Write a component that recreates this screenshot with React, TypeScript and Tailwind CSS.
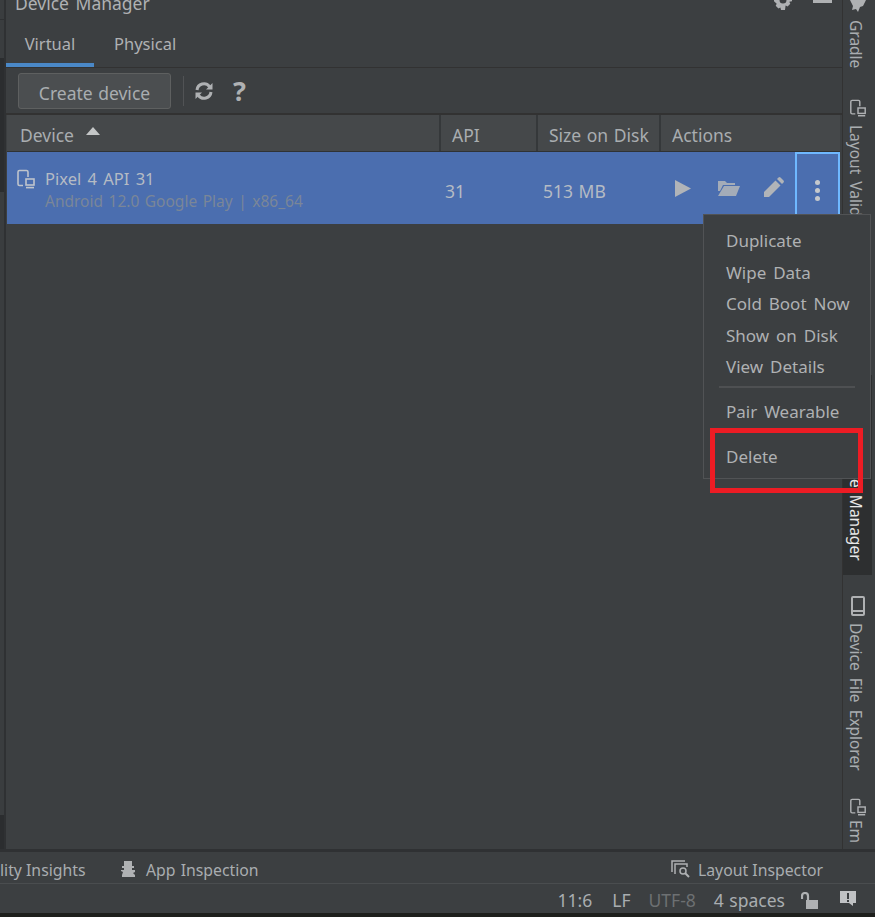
const font = "font-['Noto_Sans',sans-serif]"

function DevicesIcon({ className }: { className?: string }) {
  return (
    <svg viewBox="0 0 20 20" className={className} fill="none" stroke="currentColor" strokeWidth="1.6">
      <path d="M7 16.5H3.5a1.5 1.5 0 0 1-1.5-1.5V3a1.5 1.5 0 0 1 1.5-1.5h7A1.5 1.5 0 0 1 12 3v5" />
      <rect x="10" y="10" width="8" height="6" />
      <path d="M10 18.6h8" />
    </svg>
  )
}

function VerticalTab({ label, active }: { label: string; active?: boolean }) {
  return (
    <span className={`mr-[4px] [writing-mode:vertical-rl] [word-spacing:3px] whitespace-nowrap text-[15.5px] leading-[20px] ${active ? "text-[#e8e8e8]" : "text-[#a9adb0]"}`}>
      {label}
    </span>
  )
}

function MenuItem({ label, className }: { label: string; className?: string }) {
  return <div className={`h-[31.5px] pl-[22px] text-[17px] leading-[31.5px] [word-spacing:2.5px] whitespace-nowrap text-[#afb1b3] ${className ?? ""}`}>{label}</div>
}

function HeaderCell({ label, className }: { label: string; className: string }) {
  return <div className={`flex h-full items-center border-r-2 border-[#35383a] pt-[5px] text-[17.5px] [word-spacing:1px] text-[#a9adb0] ${className}`}>{label}</div>
}

export default function App() {
  return (
    <div className={`relative flex h-[917px] w-[875px] flex-col overflow-hidden bg-[#3c3f41] ${font}`}>
      <div className="flex h-[849px] shrink-0">
        {/* left edge strip */}
        <div className="flex w-[6px] shrink-0 flex-col border-r-2 border-[#2f3133]">
          <div className="h-[20px] border-b border-[#2f3133] bg-[#3a3d3f]" />
          <div className="h-[38px] bg-[#3a3d3f]" />
          <div className="h-[134px] bg-[#2b2d2f]" />
          <div className="h-[623px] bg-[#3a3d3f]" />
          <div className="flex-1 bg-[#2b2d2f]" />
        </div>

        {/* device manager panel */}
        <div className="flex w-[836px] shrink-0 flex-col">
          <div className="flex h-[24px] items-start justify-between overflow-hidden">
            <span className="mt-[-9px] ml-[9px] whitespace-nowrap text-[17.5px] leading-[24px] [word-spacing:2px] text-[#afb1b3]">Device Manager</span>
            <div className="flex items-start">
              <svg viewBox="0 0 20 20" className="mt-[-10px] h-[20px] w-[20px] text-[#afb1b3]" fill="currentColor" fillRule="evenodd">
                <path d="M8 0h4l.6 2.800 2-.9 2.700 2.700-1 2 2.700.6v4l-2.700.6 1 2-2.700 2.700-2-1L12 20H8l-.6-2.500-2 1-2.700-2.700 1-2L1 11.200v-4l2.700-.6-1-2 2.700-2.700 2 .9zM10 6.500a3.500 3.500 0 1 0 0 7 3.500 3.500 0 0 0 0-7z" />
              </svg>
              <div className="mr-[10px] ml-[20px] h-[3px] w-[19px] bg-[#afb1b3]" />
            </div>
          </div>

          <div className="flex h-[44px] border-b border-[#323232]">
            <div className="flex h-full w-[88px] items-center justify-center border-b-[4px] border-[#4a88c7] pt-[2px] text-[16.5px] text-[#afb1b3]">Virtual</div>
            <div className="ml-[20px] flex h-full items-center pb-[2px] text-[16.5px] text-[#afb1b3]">Physical</div>
          </div>

          <div className="flex h-[47px] items-center border-b-2 border-[#323232] pl-[12px]">
            <div className="flex h-[36px] w-[153px] items-center justify-center rounded-[3px] border border-[#5e6060] bg-[#4b4e50] pt-[6px] text-[17.5px] [word-spacing:1px] text-[#a9adb0]">Create device</div>
            <div className="ml-[12px] h-[30px] w-px bg-[#515355]" />
            <svg viewBox="0 0 20 20" className="ml-[10px] h-[20px] w-[20px] text-[#afb1b3]" fill="none" stroke="currentColor" strokeWidth="3">
              <path d="M3 9a7 7 0 0 1 12.5-3.5L17 7" />
              <path d="M17 11A7 7 0 0 1 4.500 14.500L3 13" />
              <path d="M18.500 2v6.500H12z" fill="currentColor" stroke="none" />
              <path d="M1.500 18v-6.500H8z" fill="currentColor" stroke="none" />
            </svg>
            <span className="ml-[19px] text-[27px] leading-none font-bold text-[#afb1b3]">?</span>
          </div>

          <div className="mr-[2px] ml-px flex h-[37px] items-center border-b border-[#2f3234] bg-[#45484a]">
            <div className="flex h-full w-[434px] items-center gap-[12px] border-r-2 border-[#35383a] pt-[5px] pl-[13px] text-[17.5px] text-[#a9adb0]">
              Device
              <span className="mb-[9px] h-0 w-0 border-x-[7px] border-b-[8px] border-x-transparent border-b-[#c4c6c7]" />
            </div>
            <HeaderCell label="API" className="w-[97px] pl-[11px]" />
            <HeaderCell label="Size on Disk" className="w-[123px] pl-[11px]" />
            <div className="pt-[5px] pl-[11px] text-[17.5px] text-[#a9adb0]">Actions</div>
          </div>

          <div className="mr-[2px] ml-px flex h-[72px] items-center bg-[#4b6eaf]">
            <DevicesIcon className="mb-[18px] ml-[9px] h-[20px] w-[20px] shrink-0 text-[#bfc4cc]" />
            <div className="ml-[9px] w-[400px] shrink-0 pt-[4px]">
              <div className="text-[16.5px] leading-[22px] [word-spacing:2px] text-[#b5bbc4]">Pixel 4 API 31</div>
              <div className="text-[15.5px] leading-[22px] [word-spacing:1.500px] whitespace-nowrap text-[#7a8698]">Android 12.0 Google Play | x86_64</div>
            </div>
            <div className="w-[98px] shrink-0 pt-[6px] text-[17.5px] text-[#b5bbc4]">31</div>
            <div className="w-[132px] shrink-0 pt-[6px] text-[17.5px] [word-spacing:1px] text-[#b5bbc4]">513 MB</div>
            <svg viewBox="0 0 16 17" className="h-[17px] w-[16px] shrink-0 text-[#b1b4b8]" fill="currentColor">
              <path d="M0 0l16 8.500L0 17z" />
            </svg>
            <svg viewBox="0 0 22 16" className="ml-[27px] h-[16px] w-[22px] shrink-0 text-[#a4acb8]" fill="currentColor">
              <path d="M0 1h7l2 2h8v2H5L2 11H0z" />
              <path d="M6 6h16l-4 10H0z" />
            </svg>
            <svg viewBox="0 0 20 20" className="mb-[3px] ml-[24px] h-[20px] w-[20px] shrink-0 text-[#b1b4b8]" fill="currentColor">
              <path d="M0 20v-5L11.500 3.500l5 5L5 20z" />
              <path d="M13 2l1.500-1.500a1.500 1.500 0 0 1 2 0l3 3a1.500 1.500 0 0 1 0 2L18 7z" />
            </svg>
            <div className="ml-[11px] flex h-full w-[45px] shrink-0 flex-col items-center justify-center gap-[3px] border-2 border-b-0 border-[#6fb8ff] pt-[2px]">
              <span className="h-[5px] w-[5px] rounded-full bg-[#c6c9cc]" />
              <span className="h-[5px] w-[5px] rounded-full bg-[#c6c9cc]" />
              <span className="h-[5px] w-[5px] rounded-full bg-[#c6c9cc]" />
            </div>
          </div>
        </div>

        {/* right tool window strip */}
        <div className="flex w-[33px] shrink-0 flex-col items-center overflow-hidden border-l border-[#323232] pr-[3px]">
          <svg viewBox="0 0 18 12" className="h-[12px] w-[18px] shrink-0 text-[#afb1b3]" fill="currentColor">
            <path d="M1 0h16l-3 6-3 1-2 5-2-3-4 1 1-4z" />
          </svg>
          <div className="mt-[8px] h-[58px]">
            <VerticalTab label="Gradle" />
          </div>
          <DevicesIcon className="mt-[22px] h-[20px] w-[18px] shrink-0 text-[#afb1b3]" />
          <div className="mt-[7px] h-[120px]">
            <VerticalTab label="Layout Validation" />
          </div>
          <div className="mt-[130px] flex h-[200px] w-full shrink-0 justify-center bg-[#2d2f30] pt-[65px]">
            <VerticalTab label="Device Manager" active />
          </div>
          <svg viewBox="0 0 14 20" className="mt-[21px] h-[20px] w-[14px] shrink-0 text-[#afb1b3]" fill="none" stroke="currentColor" strokeWidth="2">
            <rect x="1" y="1" width="12" height="18" rx="1" />
            <path d="M1 15h12" />
          </svg>
          <div className="mt-[7px] h-[180px]">
            <VerticalTab label="Device File Explorer" />
          </div>
          <DevicesIcon className="h-[20px] w-[18px] shrink-0 text-[#afb1b3]" />
          <div className="mt-[3px]">
            <VerticalTab label="Em" />
          </div>
        </div>
      </div>

      {/* bottom tool window bar */}
      <div className="h-[3px] shrink-0 bg-[#2f3133]" />
      <div className="flex h-[32px] shrink-0 items-center justify-between border-b border-[#4a4d4f] pt-[6px] text-[15.8px] text-[#a9adb0]">
        <div className="flex items-center">
          <span className="w-[120px] whitespace-nowrap">lity Insights</span>
          <svg viewBox="0 0 16 18" className="mb-[2px] h-[18px] w-[16px] text-[#afb1b3]" fill="currentColor">
            <path d="M4 0h8v5h2v2h-2v2h3v2l-2 1 2 2v2H2v-2l1-3-2-1V9h3V7H2V5h2z" />
          </svg>
          <span className="ml-[10px] [word-spacing:1px]">App Inspection</span>
        </div>
        <div className="mr-[52px] flex items-center gap-[7px]">
          <svg viewBox="0 0 20 18" className="mb-[4px] h-[18px] w-[20px] text-[#afb1b3]" fill="none" stroke="currentColor" strokeWidth="1.500">
            <path d="M1 12V1h13M4 14V4h12v3" />
            <circle cx="12" cy="11" r="3" />
            <path d="M14 13l4 4" strokeWidth="2" />
          </svg>
          <span>Layout Inspector</span>
        </div>
      </div>

      {/* status bar */}
      <div className="flex h-[29px] shrink-0 items-center justify-end pt-[4px] text-[17.5px] [word-spacing:1px] text-[#a9adb0]">
        <span>11:6</span>
        <span className="ml-[20px]">LF</span>
        <span className="ml-[18px] text-[#6d7072]">UTF-8</span>
        <span className="ml-[18px]">4 spaces</span>
        <svg viewBox="0 0 18 18" className="ml-[16px] h-[18px] w-[18px] text-[#afb1b3]" fill="none">
          <path d="M1 7V4a3 3 0 0 1 6 0v4" stroke="currentColor" strokeWidth="2.200" />
          <rect x="5" y="8" width="12" height="9" fill="currentColor" />
        </svg>
        <svg viewBox="0 0 18 18" className="mr-[18px] mb-[3px] ml-[20px] h-[18px] w-[18px] text-[#c0c2c4]">
          <path d="M1 1h16v12h-3v3l-4-3H1z" fill="currentColor" />
          <path d="M8 3h2v6H8zM8 10h2v2H8z" fill="#3c3f41" />
        </svg>
      </div>
      <div className="min-h-0 flex-1 bg-[#1e1f1c]" />

      {/* overflow menu */}
      <div className="absolute top-[214px] left-[703px] h-[265px] w-[168px] border border-[#515355] bg-[#3c3f41] pt-[10px]">
        <MenuItem label="Duplicate" />
        <MenuItem label="Wipe Data" />
        <MenuItem label="Cold Boot Now" />
        <MenuItem label="Show on Disk" />
        <MenuItem label="View Details" />
        <div className="mx-[15px] mt-[3px] mb-[8px] h-[2px] bg-[#4e5052]" />
        <MenuItem label="Pair Wearable" />
        <MenuItem label="Delete" className="mt-[14px]" />
      </div>

      {/* annotation */}
      <div className="absolute top-[428px] left-[710px] h-[65px] w-[153px] border-[5px] border-[#ed1c24]" />
    </div>
  )
}
